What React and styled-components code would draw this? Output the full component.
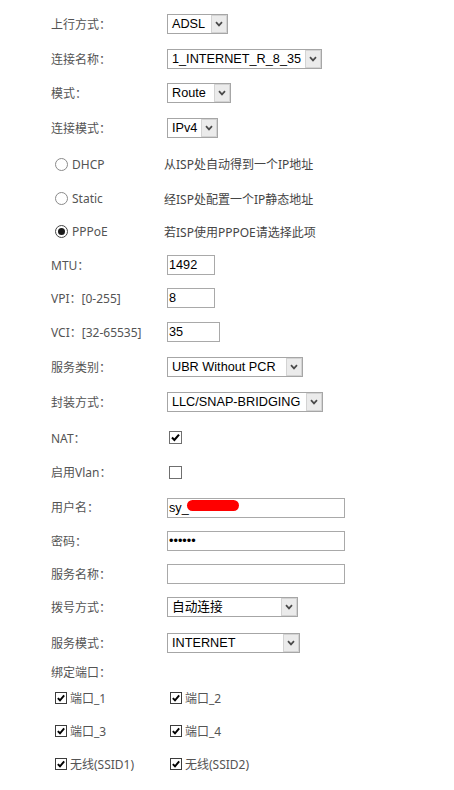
import React from "react";
import styled, { createGlobalStyle } from "styled-components";

const GlobalStyle = createGlobalStyle`
  body {
    margin: 0;
    background: #fff;
    font-family: "Noto Sans", "Noto Sans CJK SC", sans-serif;
  }
`;

const Page = styled.div`
  padding: 6px 0 0 51px;
  display: flex;
  flex-direction: column;
`;

const Row = styled.div`
  display: grid;
  grid-template-columns: 116px 1fr;
  align-items: center;
  height: ${(p) => p.$h}px;
`;

const Label = styled.span`
  font-size: 12px;
  color: #545454;
  white-space: nowrap;
`;

const Control = styled.div`
  display: flex;
  align-items: center;
  padding-left: ${(p) => p.$pad || 0}px;
`;

const Select = styled.div`
  display: flex;
  box-sizing: border-box;
  width: ${(p) => p.$w}px;
  height: 20px;
  border: 1px solid #a6a6a6;
  background: #fff;
`;

const SelectText = styled.span`
  flex: 1;
  padding-left: 4px;
  font: 12.7px/18px "Liberation Sans", "Noto Sans CJK SC", sans-serif;
  color: #000;
  white-space: nowrap;
  overflow: hidden;
`;

const SelectArrow = styled.span`
  width: 16px;
  box-sizing: border-box;
  border: 1px solid #d3d3d3;
  background: #ebebeb;
  display: flex;
  align-items: center;
  justify-content: center;
`;

const TextInput = styled.input`
  box-sizing: border-box;
  width: ${(p) => p.$w}px;
  height: 20px;
  margin: 0;
  padding: 0 1px;
  border: 1px solid #a9a9a9;
  border-radius: 0;
  background: #fff;
  font: 12.7px "Liberation Sans", sans-serif;
  color: #000;
  outline: none;
`;

const Masked = styled.div`
  position: relative;
`;

const Redact = styled.span`
  position: absolute;
  left: 20px;
  top: 5px;
  width: 52px;
  height: 11px;
  border-radius: 6px;
  background: #ff0000;
`;

const Box = styled.span`
  box-sizing: border-box;
  width: ${(p) => p.$size}px;
  height: ${(p) => p.$size}px;
  border: 1px solid ${(p) => p.$edge};
  background: #fff;
  display: inline-flex;
  align-items: center;
  justify-content: center;
  flex-shrink: 0;
`;

const RadioRow = styled.div`
  display: grid;
  grid-template-columns: 109px 1fr;
  align-items: center;
  height: ${(p) => p.$h}px;
  padding-left: 4px;
`;

const RadioOption = styled.span`
  display: flex;
  align-items: center;
  gap: 4px;
  font-size: 12px;
  color: #545454;
`;

const Dot = styled.span`
  box-sizing: border-box;
  width: 13px;
  height: 13px;
  border-radius: 50%;
  border: 1px solid ${(p) => (p.$on ? "#444" : "#8a8a8a")};
  background: #fff;
  display: inline-flex;
  align-items: center;
  justify-content: center;

  &::after {
    content: "";
    display: ${(p) => (p.$on ? "block" : "none")};
    width: 7px;
    height: 7px;
    border-radius: 50%;
    background: #1a1a1a;
  }
`;

const Desc = styled.span`
  font-size: 12px;
  color: #454545;
  white-space: nowrap;
`;

const PortRow = styled.div`
  display: grid;
  grid-template-columns: 115px 1fr;
  align-items: center;
  height: 33px;
  padding-left: 4px;
`;

const PortItem = styled.span`
  display: flex;
  align-items: center;
  gap: 3px;
  font-size: 12px;
  color: #545454;
`;

function Chevron() {
  return (
    <svg width="8" height="6" viewBox="0 0 8 6">
      <path d="M1 1.2 L4 4.4 L7 1.2" fill="none" stroke="#4a4a4a" strokeWidth="1.7" />
    </svg>
  );
}

function Check({ size }) {
  return (
    <svg width={size - 2} height={size - 2} viewBox="0 0 11 11">
      <path d="M2 5.6 L4.4 8 L9 2.6" fill="none" stroke="#000" strokeWidth="2.1" />
    </svg>
  );
}

function Dropdown({ w, value }) {
  return (
    <Select $w={w}>
      <SelectText>{value}</SelectText>
      <SelectArrow>
        <Chevron />
      </SelectArrow>
    </Select>
  );
}

function Checkbox({ on, size = 13, edge = "#6f6f6f" }) {
  return <Box $size={size} $edge={edge}>{on && <Check size={size} />}</Box>;
}

// the last row runs past the bottom edge; only its boxes show
const ports = [
  ["端口_1", "端口_2"],
  ["端口_3", "端口_4"],
  ["无线(SSID1)", "无线(SSID2)"],
  ["", ""],
];

export default function App() {
  return (
    <>
      <GlobalStyle />
      <Page>
        <Row $h={35}>
          <Label>上行方式：</Label>
          <Control><Dropdown w={61} value="ADSL" /></Control>
        </Row>
        <Row $h={35}>
          <Label>连接名称：</Label>
          <Control><Dropdown w={155} value="1_INTERNET_R_8_35" /></Control>
        </Row>
        <Row $h={34}>
          <Label>模式：</Label>
          <Control><Dropdown w={64} value="Route" /></Control>
        </Row>
        <Row $h={36}>
          <Label>连接模式：</Label>
          <Control><Dropdown w={51} value="IPv4" /></Control>
        </Row>

        <RadioRow $h={36}>
          <RadioOption><Dot />DHCP</RadioOption>
          <Desc>从ISP处自动得到一个IP地址</Desc>
        </RadioRow>
        <RadioRow $h={33}>
          <RadioOption><Dot />Static</RadioOption>
          <Desc>经ISP处配置一个IP静态地址</Desc>
        </RadioRow>
        <RadioRow $h={33}>
          <RadioOption><Dot $on />PPPoE</RadioOption>
          <Desc>若ISP使用PPPOE请选择此项</Desc>
        </RadioRow>

        <Row $h={33}>
          <Label>MTU：</Label>
          <Control><TextInput $w={48} defaultValue="1492" readOnly /></Control>
        </Row>
        <Row $h={34}>
          <Label>VPI：[0-255]</Label>
          <Control><TextInput $w={48} defaultValue="8" readOnly /></Control>
        </Row>
        <Row $h={34}>
          <Label>VCI：[32-65535]</Label>
          <Control><TextInput $w={53} defaultValue="35" readOnly /></Control>
        </Row>
        <Row $h={35}>
          <Label>服务类别：</Label>
          <Control><Dropdown w={136} value="UBR Without PCR" /></Control>
        </Row>
        <Row $h={36}>
          <Label>封装方式：</Label>
          <Control><Dropdown w={156} value="LLC/SNAP-BRIDGING" /></Control>
        </Row>
        <Row $h={35}>
          <Label>NAT：</Label>
          <Control $pad={2}><Checkbox on /></Control>
        </Row>
        <Row $h={34}>
          <Label>启用Vlan：</Label>
          <Control $pad={2}><Checkbox /></Control>
        </Row>
        <Row $h={35}>
          <Label>用户名：</Label>
          <Control>
            <Masked>
              <TextInput $w={178} defaultValue="sy_" readOnly />
              <Redact />
            </Masked>
          </Control>
        </Row>
        <Row $h={33}>
          <Label>密码：</Label>
          <Control><TextInput $w={178} type="password" defaultValue="123456" readOnly /></Control>
        </Row>
        <Row $h={33}>
          <Label>服务名称：</Label>
          <Control><TextInput $w={178} defaultValue="" readOnly /></Control>
        </Row>
        <Row $h={33}>
          <Label>拨号方式：</Label>
          <Control><Dropdown w={131} value="自动连接" /></Control>
        </Row>
        <Row $h={40}>
          <Label>服务模式：</Label>
          <Control><Dropdown w={133} value="INTERNET" /></Control>
        </Row>
        <Row $h={18}>
          <Label>绑定端口：</Label>
        </Row>
        {ports.map(([a, b], i) => (
          <PortRow key={i}>
            <PortItem><Checkbox on size={12} edge="#3c3c3c" />{a}</PortItem>
            <PortItem><Checkbox on size={12} edge="#3c3c3c" />{b}</PortItem>
          </PortRow>
        ))}
      </Page>
    </>
  );
}
